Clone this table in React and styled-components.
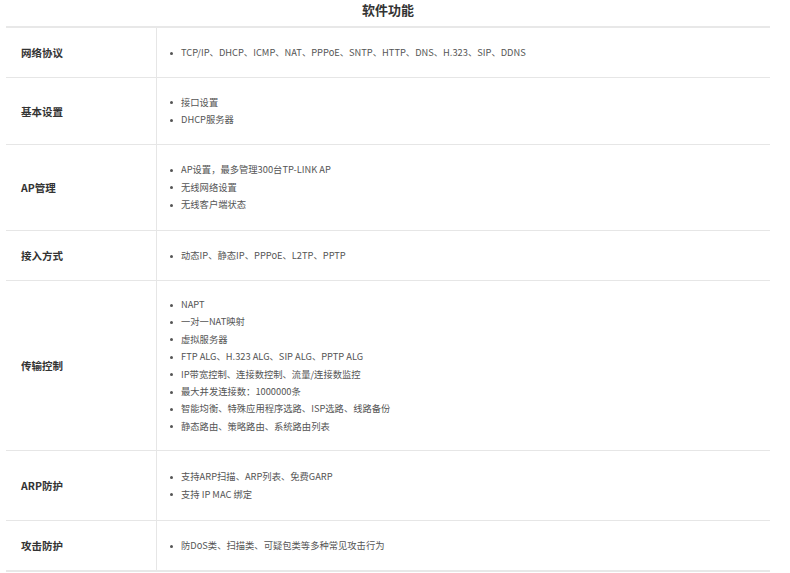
import React from "react";
import styled, { createGlobalStyle } from "styled-components";

const rows = [
  {
    label: "网络协议",
    items: ["TCP/IP、DHCP、ICMP、NAT、PPPoE、SNTP、HTTP、DNS、H.323、SIP、DDNS"],
    pad: [16, 15.6],
  },
  { label: "基本设置", items: ["接口设置", "DHCP服务器"], pad: [15.6, 15.6] },
  {
    label: "AP管理",
    items: ["AP设置，最多管理300台TP-LINK AP", "无线网络设置", "无线客户端状态"],
    pad: [16.4, 16.4],
  },
  { label: "接入方式", items: ["动态IP、静态IP、PPPoE、L2TP、PPTP"], pad: [16, 15.6] },
  {
    label: "传输控制",
    items: [
      "NAPT",
      "一对一NAT映射",
      "虚拟服务器",
      "FTP ALG、H.323 ALG、SIP ALG、PPTP ALG",
      "IP带宽控制、连接数控制、流量/连接数监控",
      "最大并发连接数：1000000条",
      "智能均衡、特殊应用程序选路、ISP选路、线路备份",
      "静态路由、策略路由、系统路由列表",
    ],
    pad: [15, 14.8],
  },
  {
    label: "ARP防护",
    items: ["支持ARP扫描、ARP列表、免费GARP", "支持 IP MAC 绑定"],
    pad: [17.1, 17.1],
  },
  { label: "攻击防护", items: ["防DoS类、扫描类、可疑包类等多种常见攻击行为"], pad: [16, 15.6] },
];

const GlobalStyle = createGlobalStyle`
  html, body {
    margin: 0;
    padding: 0;
    background: #fff;
  }
  body {
    font-family: "Microsoft YaHei", "Noto Sans CJK SC", "Liberation Sans", sans-serif;
  }
`;

const Page = styled.div`
  width: 790px;
  padding: 0 20px 0 6px;
  box-sizing: border-box;
`;

const Title = styled.h2`
  margin: 0;
  height: 26px;
  line-height: 20px;
  text-align: center;
  font-size: 13px;
  font-weight: bold;
  color: #333;
`;

const Table = styled.div`
  border-top: 2px solid #e8e8e8;
  border-bottom: 2px solid #e8e8e8;
`;

const Row = styled.div`
  display: grid;
  grid-template-columns: 151px 1fr;
  border-top: ${(p) => (p.$first ? "none" : "1px solid #e6e6e6")};
`;

const Label = styled.div`
  display: flex;
  align-items: center;
  padding-left: 15px;
  border-right: 1px solid #e6e6e6;
  font-size: 10.5px;
  font-weight: bold;
  color: #333;
`;

const List = styled.ul`
  margin: 0;
  padding: ${(p) => p.$pad[0]}px 0 ${(p) => p.$pad[1]}px 24px;
  list-style: none;
`;

const Item = styled.li`
  position: relative;
  line-height: 17.4px;
  font-size: 9.3px;
  color: #555;
  &::before {
    content: "";
    position: absolute;
    left: -11px;
    top: 7.5px;
    width: 3px;
    height: 3px;
    border-radius: 50%;
    background: #555;
  }
`;

export default function App() {
  return (
    <Page>
      <GlobalStyle />
      <Title>软件功能</Title>
      <Table>
        {rows.map((row, i) => (
          <Row key={row.label} $first={i === 0}>
            <Label>{row.label}</Label>
            <List $pad={row.pad}>
              {row.items.map((it) => (
                <Item key={it}>{it}</Item>
              ))}
            </List>
          </Row>
        ))}
      </Table>
    </Page>
  );
}
